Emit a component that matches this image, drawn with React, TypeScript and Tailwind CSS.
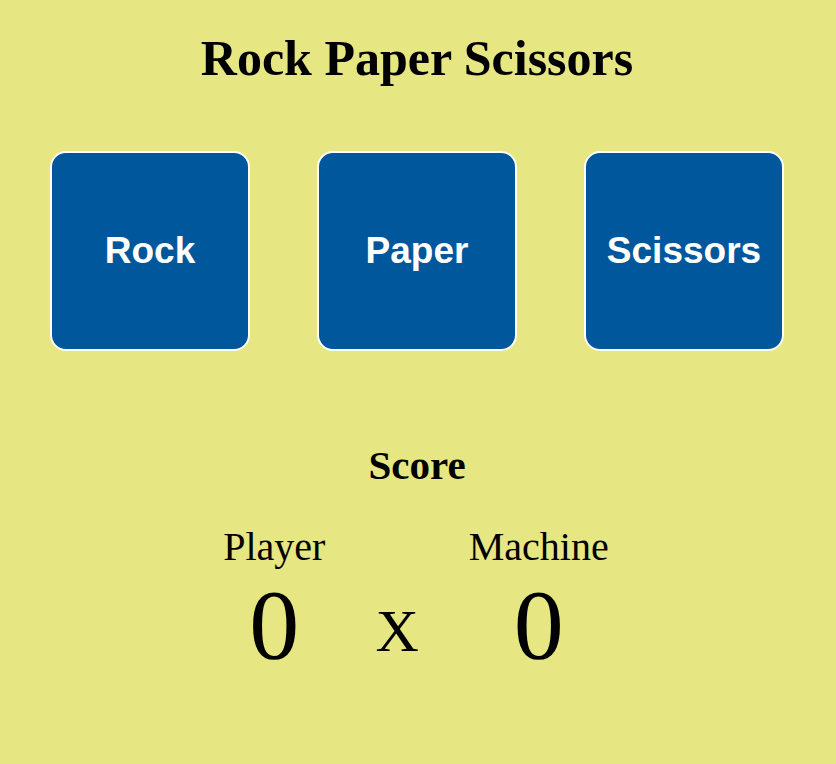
const choices = ['Rock', 'Paper', 'Scissors'];

export default function App() {
  return (
    <div className="min-h-[764px] bg-[#e6e682] text-black font-['Liberation_Serif',serif] overflow-hidden pr-[2px]">
      <h1 className="pt-[33px] text-center text-[50px] font-bold leading-none">Rock Paper Scissors</h1>

      <div className="mt-[68px] flex justify-center gap-[67px]">
        {choices.map((c) => (
          <button
            key={c}
            className="w-[200px] h-[200px] flex items-center justify-center rounded-[16px] border-2 border-white bg-[#01579b] text-white text-[37px] font-bold font-['Liberation_Sans',Arial,sans-serif]"
          >
            {c}
          </button>
        ))}
      </div>

      <h2 className="mt-[94px] text-center text-[41px] font-bold leading-none">Score</h2>

      <div className="mt-[41px] pr-[2px] flex justify-center items-start gap-[50px]">
        <div className="flex flex-col items-center">
          <span className="text-[40px] leading-none">Player</span>
          <span className="mt-[8px] text-[100px] leading-none">0</span>
        </div>
        <span className="mt-[74px] text-[60px] leading-none">X</span>
        <div className="flex flex-col items-center">
          <span className="text-[40px] leading-none">Machine</span>
          <span className="mt-[8px] text-[100px] leading-none">0</span>
        </div>
      </div>
    </div>
  );
}
